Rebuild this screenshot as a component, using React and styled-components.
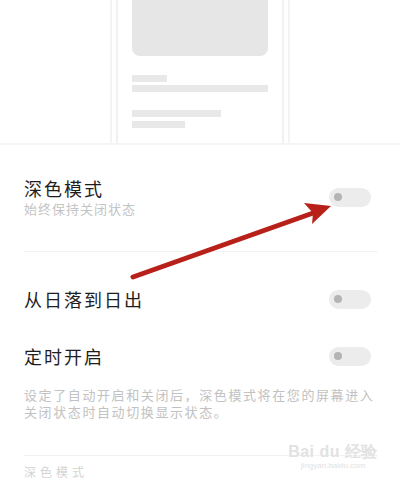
import React from 'react';
import styled, { createGlobalStyle } from 'styled-components';

const GlobalStyle = createGlobalStyle`
  html, body {
    margin: 0;
    padding: 0;
    background: #ffffff;
    overflow: hidden;
  }
  body {
    font-family: "Noto Sans CJK SC", "Noto Sans", sans-serif;
  }
`

const Page = styled.div`
  position: relative;
  width: 400px;
  height: 482px;
  overflow: hidden;
  background: #fff;
`

const Preview = styled.div`
  height: 143px;
  display: flex;
  justify-content: center;
  border-bottom: 2px solid #f4f4f4;
`

const PhoneOuter = styled.div`
  width: 180px;
  height: 143px;
  box-sizing: border-box;
  padding: 0 4px;
  border-left: 2px solid #f3f3f3;
  border-right: 2px solid #f3f3f3;
  display: flex;
`

const PhoneInner = styled.div`
  flex: 1;
  border-left: 2px solid #f1f1f1;
  border-right: 2px solid #f1f1f1;
  padding: 0 13px 0 14px;
  display: flex;
  flex-direction: column;
  align-items: flex-start;
`

const ImageBlock = styled.div`
  width: 136px;
  height: 56px;
  background: #e6e6e6;
  border-radius: 0 0 8px 8px;
  margin-bottom: 19px;
`

const Bar = styled.div`
  width: ${p => p.w}px;
  height: 7px;
  background: #e8e8e8;
  margin-bottom: ${p => p.mb}px;
`

const Settings = styled.div`
  padding: 0 29px 0 24px;
`

const Row = styled.div`
  display: flex;
  align-items: center;
  justify-content: space-between;
  padding-top: ${p => p.pt}px;
  padding-bottom: ${p => p.pb}px;
  margin-right: ${p => (p.line ? '-7px' : '0')};
  padding-right: ${p => (p.line ? '7px' : '0')};
  border-bottom: ${p => (p.line ? '1px solid #f2f2f2' : 'none')};
`

const TextCol = styled.div`
  display: flex;
  flex-direction: column;
`

const Title = styled.div`
  font-size: 18px;
  line-height: 24px;
  color: #1e1e1e;
  letter-spacing: 2px;
`

const Sub = styled.div`
  font-size: 13px;
  line-height: 18px;
  color: #c4c4c4;
  letter-spacing: 1px;
`

const Toggle = styled.div`
  width: 42px;
  height: 19px;
  border-radius: 10px;
  background: #ececec;
  display: flex;
  align-items: center;
  padding-left: 5px;
  box-sizing: border-box;
  flex-shrink: 0;
`

const Knob = styled.div`
  width: 8px;
  height: 8px;
  border-radius: 50%;
  background: #b4b4b4;
`

const Desc = styled.div`
  margin-top: 18px;
  margin-right: -7px;
  padding-bottom: 35px;
  font-size: 13px;
  line-height: 17px;
  color: #c2c2c2;
  letter-spacing: 1.6px;
  border-bottom: 1px solid #f2f2f2;
`

const Partial = styled.div`
  margin-top: 9px;
  font-size: 12px;
  line-height: 14px;
  color: #d4d4d4;
  letter-spacing: 4px;
`

const Arrow = styled.svg`
  position: absolute;
  left: 0;
  top: 0;
  pointer-events: none;
`

const Watermark = styled.div`
  position: absolute;
  right: 22px;
  top: 442px;
  display: flex;
  flex-direction: column;
  align-items: center;
  color: #e2e2e2;
  font-family: "Liberation Sans", sans-serif;
`

const WmMain = styled.div`
  font-size: 16px;
  font-weight: bold;
  letter-spacing: 0.5px;
`

const WmSub = styled.div`
  font-size: 8px;
  margin-top: -2px;
`

function Switch() {
  return (
    <Toggle>
      <Knob />
    </Toggle>
  )
}

export default function App() {
  return (
    <Page>
      <GlobalStyle />
      <Preview>
        <PhoneOuter>
          <PhoneInner>
            <ImageBlock />
            <Bar w={35} mb={3} />
            <Bar w={136} mb={18} />
            <Bar w={89} mb={4} />
            <Bar w={53} mb={0} />
          </PhoneInner>
        </PhoneOuter>
      </Preview>
      <Settings>
        <Row pt={31} pb={33} line>
          <TextCol>
            <Title>深色模式</Title>
            <Sub>始终保持关闭状态</Sub>
          </TextCol>
          <Switch />
        </Row>
        <Row pt={35} pb={0}>
          <Title>从日落到日出</Title>
          <Switch />
        </Row>
        <Row pt={33} pb={0}>
          <Title>定时开启</Title>
          <Switch />
        </Row>
        <Desc>设定了自动开启和关闭后，深色模式将在您的屏幕进入关闭状态时自动切换显示状态。</Desc>
        <Partial>深色模式</Partial>
      </Settings>
      <Watermark>
        <WmMain>Bai du 经验</WmMain>
        <WmSub>jingyan.baidu.com</WmSub>
      </Watermark>
      <Arrow width="400" height="482" viewBox="0 0 400 482">
        <line x1="133" y1="277" x2="316" y2="212" stroke="#b8201a" strokeWidth="5" strokeLinecap="round" />
        <polygon points="331,206 304,203 313,213 312,224" fill="#b8201a" />
      </Arrow>
    </Page>
  )
}
